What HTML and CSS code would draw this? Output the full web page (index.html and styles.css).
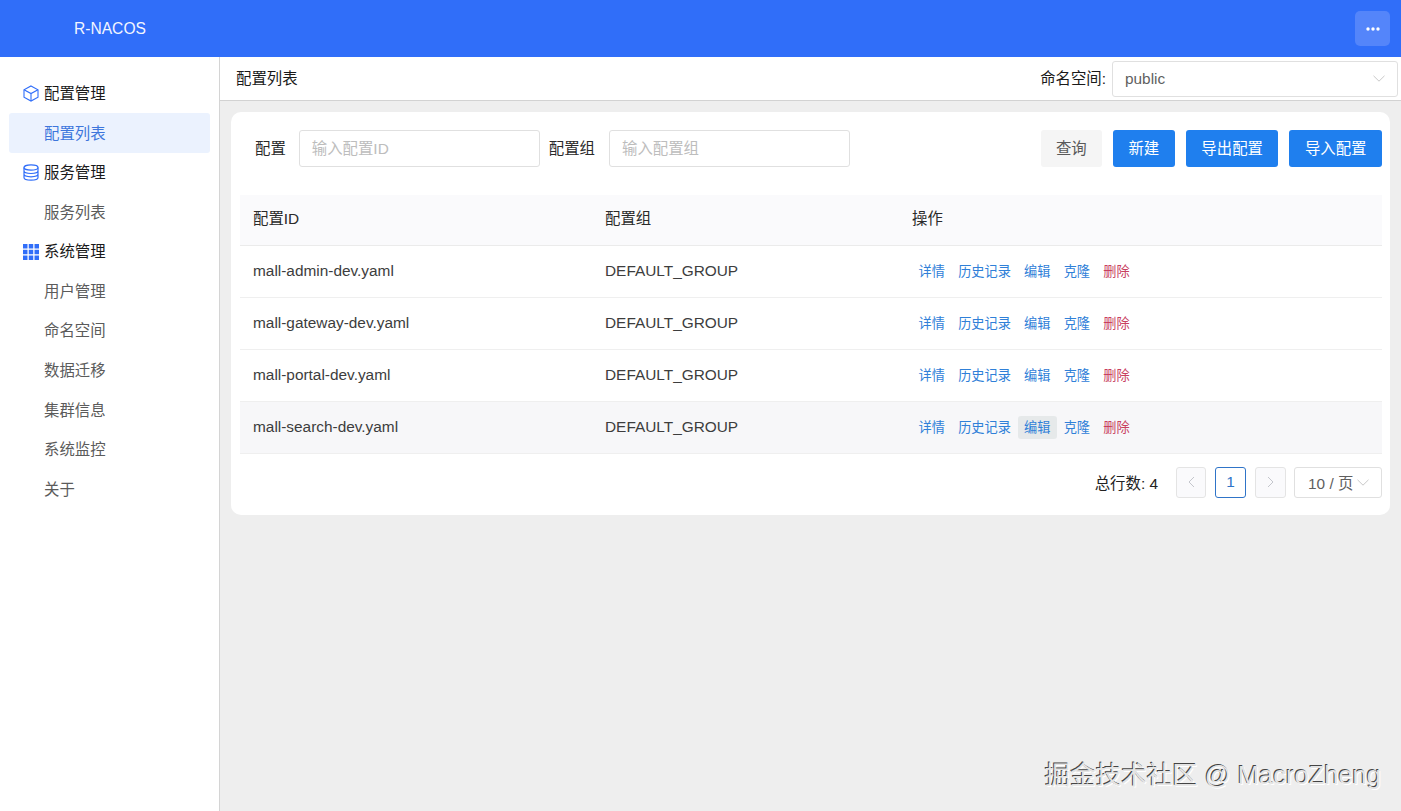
FILE: index.html
```html
<!DOCTYPE html>
<html lang="zh">
<head>
<meta charset="utf-8">
<title>R-NACOS</title>
<link rel="stylesheet" href="styles.css">
</head>
<body>
<header class="topbar">
  <div class="brand">R-NACOS</div>
  <button class="more"><svg width="14" height="4" viewBox="0 0 14 4"><circle cx="2" cy="2" r="1.7"/><circle cx="7" cy="2" r="1.7"/><circle cx="12" cy="2" r="1.7"/></svg></button>
</header>
<div class="shell">
  <nav class="sidebar">
    <div class="item group">
      <svg class="ico" viewBox="0 0 16 17" fill="none" stroke="#306ef9" stroke-width="1.100"><path d="M8 1 15 4.800v7.400L8 16l-7-3.800V4.800Z"/><path d="M1 4.800 8 8.600l7-3.800M8 8.600V16"/></svg>
      配置管理</div>
    <div class="item sub active">配置列表</div>
    <div class="item group">
      <svg class="ico" viewBox="0 0 16 17" fill="none" stroke="#306ef9" stroke-width="1.200"><ellipse cx="8" cy="3.500" rx="7" ry="2.700"/><path d="M1 3.500v10c0 1.500 3.100 2.700 7 2.700s7-1.200 7-2.700v-10M1 6.800c0 1.500 3.100 2.700 7 2.700s7-1.200 7-2.700M1 10.100c0 1.500 3.100 2.700 7 2.700s7-1.200 7-2.700"/></svg>
      服务管理</div>
    <div class="item sub">服务列表</div>
    <div class="item group">
      <svg class="ico grid-ico" viewBox="0 0 15 15" fill="#306ef9"><rect x="0" y="0" width="4.200" height="4.200"/><rect x="5.400" y="0" width="4.200" height="4.200"/><rect x="10.800" y="0" width="4.200" height="4.200"/><rect x="0" y="5.400" width="4.200" height="4.200"/><rect x="5.400" y="5.400" width="4.200" height="4.200"/><rect x="10.800" y="5.400" width="4.200" height="4.200"/><rect x="0" y="10.800" width="4.200" height="4.200"/><rect x="5.400" y="10.800" width="4.200" height="4.200"/><rect x="10.800" y="10.800" width="4.200" height="4.200"/></svg>
      系统管理</div>
    <div class="item sub">用户管理</div>
    <div class="item sub">命名空间</div>
    <div class="item sub">数据迁移</div>
    <div class="item sub">集群信息</div>
    <div class="item sub">系统监控</div>
    <div class="item sub">关于</div>
  </nav>
  <main class="content">
    <div class="crumbbar">
      <div class="crumb">配置列表</div>
      <div class="ns">
        <span class="ns-label">命名空间:</span>
        <div class="select ns-select"><span>public</span>
          <svg class="chev" width="12" height="7" viewBox="0 0 12 7" fill="none" stroke="#c8c8c8"><path d="M.5.8 6 6.200 11.500.8"/></svg>
        </div>
      </div>
    </div>
    <section class="card">
      <div class="filters">
        <label class="flabel first">配置</label>
        <div class="input">输入配置ID</div>
        <label class="flabel">配置组</label>
        <div class="input">输入配置组</div>
        <div class="actions">
          <button class="btn ghost">查询</button>
          <button class="btn primary">新建</button>
          <button class="btn primary">导出配置</button>
          <button class="btn primary">导入配置</button>
        </div>
      </div>
      <table class="tbl">
        <colgroup><col class="c1"><col class="c2"><col></colgroup>
        <thead><tr><th>配置ID</th><th>配置组</th><th>操作</th></tr></thead>
        <tbody>
          <tr><td>mall-admin-dev.yaml</td><td>DEFAULT_GROUP</td><td><div class="ops"><span class="op">详情</span><span class="op">历史记录</span><span class="op">编辑</span><span class="op">克隆</span><span class="op danger">删除</span></div></td></tr>
          <tr><td>mall-gateway-dev.yaml</td><td>DEFAULT_GROUP</td><td><div class="ops"><span class="op">详情</span><span class="op">历史记录</span><span class="op">编辑</span><span class="op">克隆</span><span class="op danger">删除</span></div></td></tr>
          <tr><td>mall-portal-dev.yaml</td><td>DEFAULT_GROUP</td><td><div class="ops"><span class="op">详情</span><span class="op">历史记录</span><span class="op">编辑</span><span class="op">克隆</span><span class="op danger">删除</span></div></td></tr>
          <tr class="hover"><td>mall-search-dev.yaml</td><td>DEFAULT_GROUP</td><td><div class="ops"><span class="op">详情</span><span class="op">历史记录</span><span class="op on">编辑</span><span class="op">克隆</span><span class="op danger">删除</span></div></td></tr>
        </tbody>
      </table>
      <div class="pager">
        <span class="total">总行数: 4</span>
        <span class="pg off prev"><svg width="7" height="12" viewBox="0 0 7 12" fill="none" stroke="#c4c6cc"><path d="M6 1 1 6l5 5"/></svg></span>
        <span class="pg cur">1</span>
        <span class="pg off"><svg width="7" height="12" viewBox="0 0 7 12" fill="none" stroke="#c4c6cc"><path d="m1 1 5 5-5 5"/></svg></span>
        <div class="select size"><span>10 / 页</span><svg width="12" height="7" viewBox="0 0 12 7" fill="none" stroke="#c8c8c8"><path d="M.5.8 6 6.200 11.500.8"/></svg></div>
      </div>
    </section>
    <div class="mark">掘金技术社区 @ MacroZheng</div>
  </main>
</div>
</body>
</html>
```
FILE: styles.css
```css
* { box-sizing: border-box; }
html, body { margin: 0; height: 100%; overflow: hidden; }
body {
  font-family: "Liberation Sans", "Noto Sans CJK SC", sans-serif;
  font-size: 15.4px;
  color: #1f1f1f;
  background: #fff;
}
button { font: inherit; border: 0; padding: 0; }

.topbar {
  height: 57px;
  background: #306ef9;
  display: flex;
  align-items: center;
  justify-content: space-between;
  padding: 0 11px 0 74px;
}
.brand { color: #f2f5ff; font-size: 15.6px; }
.more {
  width: 35px; height: 35px; border-radius: 5px;
  background: #5485fa;
  display: flex; align-items: center; justify-content: center;
  fill: #fff;
}

.shell { display: flex; height: 754px; }
.sidebar {
  width: 220px;
  flex: none;
  border-right: 1px solid #d4d4d4;
  padding: 15.5px 9px 0;
  display: grid;
  grid-auto-rows: 39.6px;
  align-content: start;
}
.item {
  display: flex; align-items: center; gap: 5px;
  width: 201px;
  padding-bottom: 1px;
  border-radius: 3px;
}
.group { padding-left: 14px; color: #1a1a1a; }
.sub { padding-left: 35px; color: #5b5b5b; }
.active { background: #ebf2fe; color: #3d76dc; height: 40px; margin-top: 1px; padding-bottom: 3px; }
.ico { width: 16px; height: 17px; flex: none; margin-top: 3px; }
.grid-ico { height: 16px; }

.content { flex: 1; background: #eeeeee; position: relative; min-width: 0; }
.crumbbar {
  height: 44px;
  background: #fff;
  border-bottom: 1px solid #d2d2d2;
  display: flex; align-items: center; justify-content: space-between;
  padding: 0 3px 0 16px;
}
.crumb { color: #1a1a1a; padding-bottom: 3px; }
.ns { display: flex; align-items: center; gap: 6px; color: #1a1a1a; }
.ns-label { padding-bottom: 3px; }
.select {
  display: flex; align-items: center; justify-content: space-between;
  background: #fff;
  border: 1px solid #e0e0e0;
  border-radius: 3px;
  color: #5f5f5f;
}
.ns-select { width: 286px; height: 36px; padding: 0 12px; }

.card {
  margin: 11px 11px 0;
  height: 403px;
  background: #fff;
  border-radius: 10px;
  padding: 18px 8px 0 9px;
}
.filters { display: flex; align-items: center; height: 37px; }
.flabel { color: #2a2a2a; margin-right: 13px; white-space: nowrap; padding-bottom: 3px; }
.flabel + .input + .flabel { margin-right: 14px; }
.flabel.first { margin-left: 15px; }
.input {
  width: 241px; height: 37px;
  border: 1px solid #e0e0e0; border-radius: 3px;
  padding: 0 12px 3px;
  display: flex; align-items: center;
  color: #bdbdbd;
  margin-right: 9px;
}
.actions { margin-left: auto; display: flex; gap: 11px; }
.btn { height: 37px; border-radius: 3px; padding-bottom: 3px; }
.ghost { width: 61px; background: #f5f5f5; color: #5a5a5a; }
.primary { background: #1f7fee; color: #fff; padding: 0 15.5px 3px; min-width: 62px; }

.tbl {
  width: 1142px;
  margin-top: 28px;
  border-collapse: collapse;
  table-layout: fixed;
}
.c1 { width: 352px; }
.c2 { width: 307px; }
.tbl th {
  height: 50px;
  background: #fafafc;
  border-bottom: 1px solid #ebebeb;
  text-align: left; font-weight: 400;
  color: #2a2a2a;
  padding: 0 13px 5px;
}
.tbl td {
  height: 52px;
  border-bottom: 1px solid #efefef;
  padding: 0 13px;
  color: #3d3d3d;
}
.hover td { background: #f7f7f9; }
.ops { display: flex; }
.op {
  font-size: 13.2px;
  line-height: 23px;
  padding: 0 6.6px;
  color: #2f80d8;
  border-radius: 3px;
  white-space: nowrap;
}
.on { background: #e6e9ea; }
.danger { color: #c8405f; }

.pager {
  display: flex; align-items: center; justify-content: flex-end;
  margin-top: 13px; height: 31px;
}
.total { color: #222; margin-right: 18px; }
.pg {
  width: 31px; height: 31px;
  border-radius: 3px;
  display: flex; align-items: center; justify-content: center;
  margin-right: 9px;
}
.pg.prev { width: 30px; }
.off { background: #fafafc; border: 1px solid #e4e4e4; }
.cur { border: 1px solid #2f74c8; color: #2f74c8; }
.size {
  width: 88px; height: 31px; padding: 0 12px 0 13px;
  margin-left: -1px;
}

.mark {
  position: absolute;
  right: 20px; top: 697px;
  color: #e4e4e4;
  font-size: 25.5px;
  white-space: nowrap;
  text-shadow: -1px -1px 0 #444, 1px 1px 0 #fff;
}
```
